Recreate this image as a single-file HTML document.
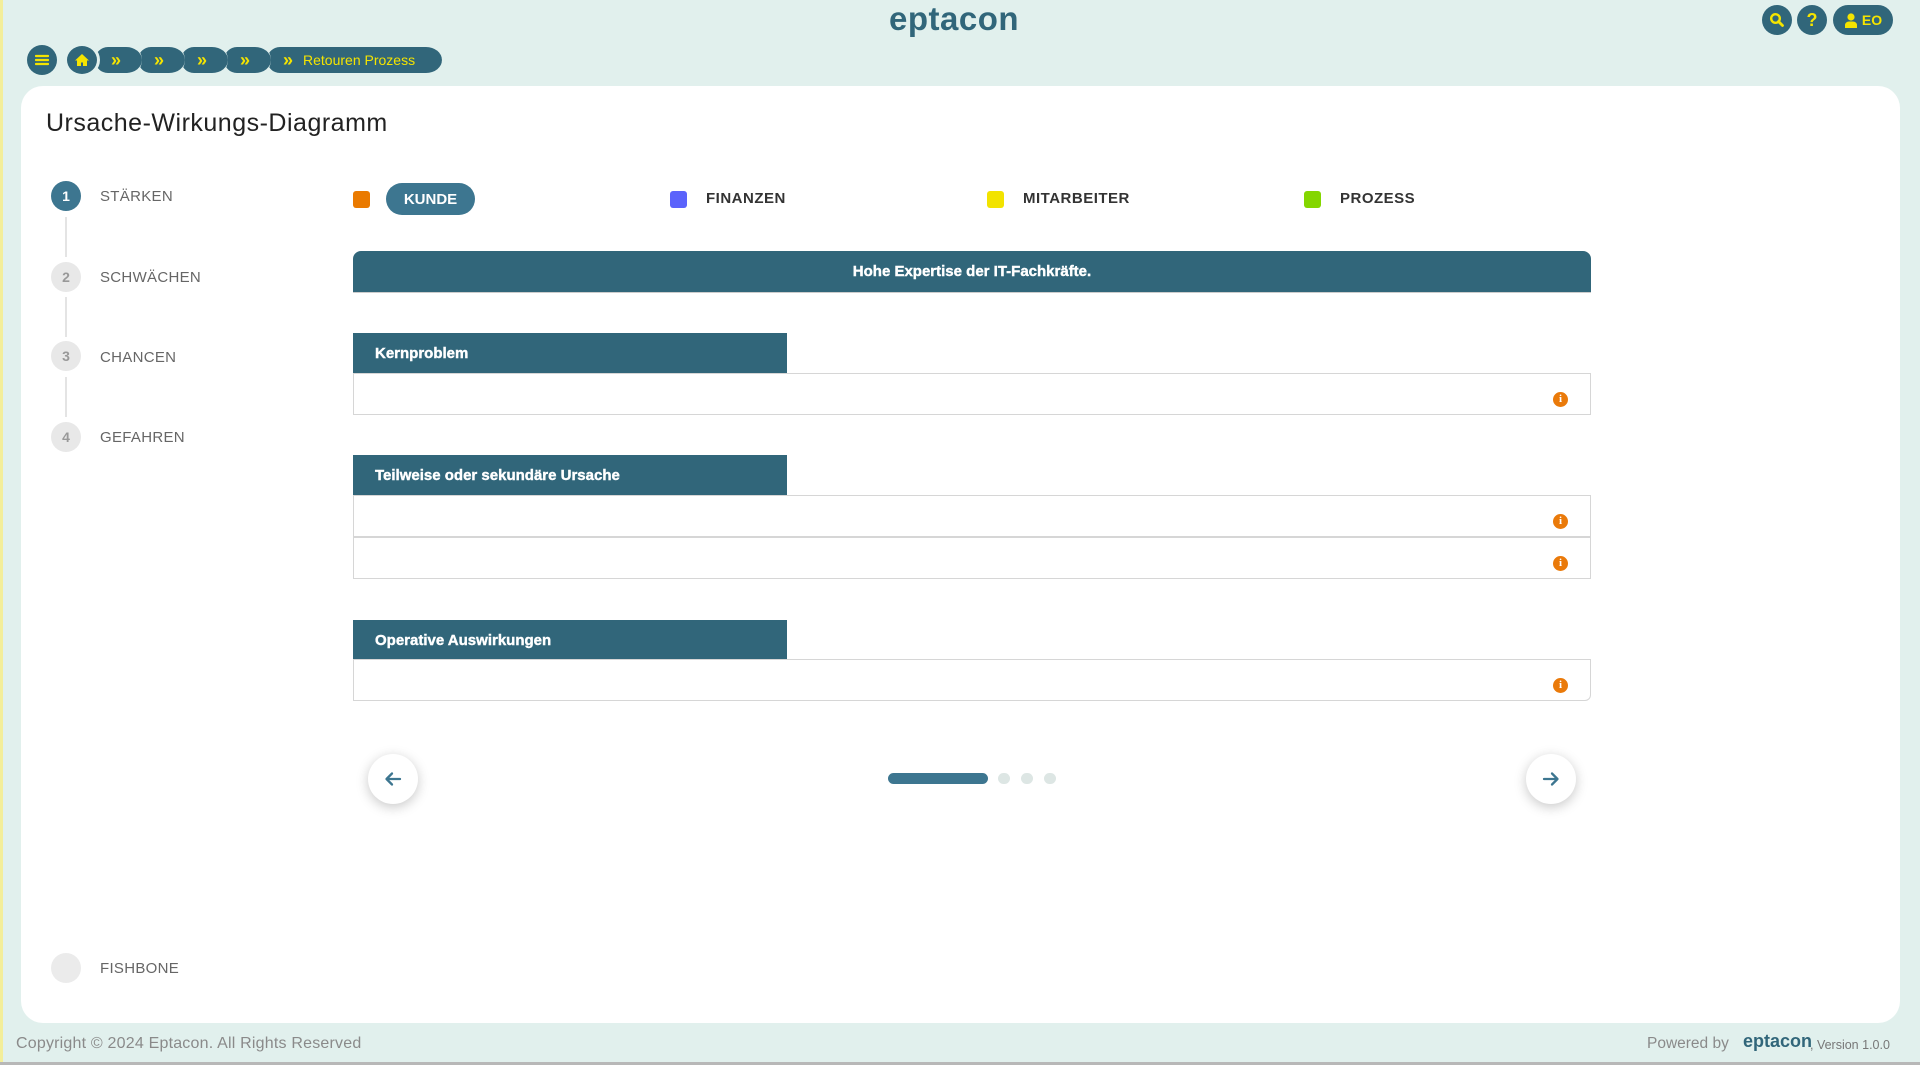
<!DOCTYPE html>
<html><head><meta charset="utf-8"><style>
*{box-sizing:border-box;margin:0;padding:0}
body{width:1920px;height:1065px;background:#e1f0ed;font-family:"Liberation Sans",sans-serif;position:relative;overflow:hidden}
.a{position:absolute}
.logo{left:889px;top:0px;font-size:33px;font-weight:bold;color:#31667a;letter-spacing:.5px}
.tb{background:#31667a;border-radius:16px;height:30px;top:5px;display:flex;align-items:center;justify-content:center;color:#f5e400;font-weight:bold;font-size:14px}
.card{left:21px;top:86px;width:1879px;height:937px;background:#fff;border-radius:22px}
.crumb{top:44px;height:32px;background:#31667a;border-radius:16px;color:#f5e400;display:flex;align-items:center;font-size:14px;border:3px solid #e1f0ed;border-right:none}
.crumb b{font-size:18px;line-height:18px}
.step{left:51px;width:30px;height:30px;border-radius:50%;background:#e8e8e8;color:#999;font-weight:bold;font-size:14px;display:flex;align-items:center;justify-content:center}
.sl{left:100px;font-size:15px;color:#666;letter-spacing:.3px}
.vl{left:65px;width:2px;background:#e4e4e4;height:40px}
.sq{width:17px;height:17px;border-radius:3px;top:191px}
.cat{top:190px;font-size:15px;font-weight:bold;color:#333;letter-spacing:.5px}
.lab{left:353px;width:434px;height:40px;background:#31667a;color:#fff;font-weight:bold;font-size:15px;padding:0 0 0 22px;display:flex;align-items:center;-webkit-text-stroke:.4px #fff}
.inp{left:353px;width:1238px;height:42px;border:1.5px solid #d6d6d6;background:#fff}
.info{left:1553px;width:15px;height:15px;border-radius:50%;background:#ea7a0a;color:#fff;font-size:11px;font-weight:bold;text-align:center;line-height:15px;font-family:"Liberation Serif",serif}
.arr{top:754px;width:50px;height:50px;border-radius:50%;background:#fff;box-shadow:0 3px 12px rgba(0,0,0,.22);display:flex;align-items:center;justify-content:center}
.dot{top:773px;width:12px;height:11px;border-radius:6px;background:#dde6e4}
</style></head><body>
<div class="a" style="left:0;top:0;width:3px;height:1065px;background:#f3ee9a"></div>
<div class="a" style="left:0;top:1062px;width:1920px;height:3px;background:#b8b8b8"></div>
<div class="a logo">eptacon</div>
<div class="a tb" style="left:1762px;width:30px;border-radius:50%"><svg width="16" height="16" viewBox="0 0 16 16"><circle cx="6.5" cy="6.5" r="4.3" stroke="#f5e400" stroke-width="2.4" fill="none"/><path d="M9.5 9.5l4 4" stroke="#f5e400" stroke-width="2.8" stroke-linecap="round"/></svg></div>
<div class="a tb" style="left:1797px;width:30px;border-radius:50%;font-size:18px">?</div>
<div class="a tb" style="left:1833px;width:60px"><svg width="14" height="15" viewBox="0 0 14 15" style="margin-right:4px"><circle cx="7" cy="4" r="3.6" fill="#f5e400"/><path d="M1 15v-3c0-2 2-3.5 4-3.5h4c2 0 4 1.5 4 3.5v3z" fill="#f5e400"/></svg>EO</div>

<div class="a card"></div>

<div class="a" style="left:27px;top:45px;width:30px;height:30px;border-radius:50%;background:#31667a;display:flex;align-items:center;justify-content:center"><svg width="14" height="12" viewBox="0 0 14 12"><path d="M1 2h12M1 6h12M1 10h12" stroke="#f5e400" stroke-width="2.2" stroke-linecap="round"/></svg></div>
<div class="a crumb" style="left:264px;width:178px;padding-left:16px"><b style="margin-right:10px">»</b>Retouren Prozess</div>
<div class="a crumb" style="left:221px;width:50px;padding-left:16px"><b>»</b></div>
<div class="a crumb" style="left:178px;width:50px;padding-left:16px"><b>»</b></div>
<div class="a crumb" style="left:135px;width:50px;padding-left:16px"><b>»</b></div>
<div class="a crumb" style="left:92px;width:50px;padding-left:16px"><b>»</b></div>
<div class="a" style="left:64px;top:43px;width:36px;height:34px;border-radius:50%;background:#31667a;border:3px solid #e1f0ed;display:flex;align-items:center;justify-content:center"><svg width="16" height="14" viewBox="0 0 16 14"><path d="M8 1L1 7.5h2V13h4V9.5h2V13h4V7.5h2z" fill="#f5e400"/></svg></div>

<div class="a" style="left:46px;top:109px;font-size:25px;color:#222;letter-spacing:.5px">Ursache-Wirkungs-Diagramm</div>

<div class="a step" style="top:181px;background:#3d7690;color:#fff">1</div>
<div class="a sl" style="top:188px">STÄRKEN</div>
<div class="a vl" style="top:217px"></div>
<div class="a step" style="top:262px">2</div>
<div class="a sl" style="top:269px">SCHWÄCHEN</div>
<div class="a vl" style="top:297px"></div>
<div class="a step" style="top:341px">3</div>
<div class="a sl" style="top:349px">CHANCEN</div>
<div class="a vl" style="top:377px"></div>
<div class="a step" style="top:422px">4</div>
<div class="a sl" style="top:429px">GEFAHREN</div>
<div class="a step" style="top:953px;background:#ebebeb"></div>
<div class="a sl" style="top:960px">FISHBONE</div>

<div class="a sq" style="left:353px;background:#ea7a00"></div>
<div class="a" style="left:386px;top:183px;width:89px;height:32px;border-radius:16px;background:#3d7690;color:#fff;font-weight:bold;font-size:15px;display:flex;align-items:center;justify-content:center">KUNDE</div>
<div class="a sq" style="left:670px;background:#5b63fb"></div>
<div class="a cat" style="left:706px">FINANZEN</div>
<div class="a sq" style="left:987px;background:#f2e300"></div>
<div class="a cat" style="left:1023px">MITARBEITER</div>
<div class="a sq" style="left:1304px;background:#84d600"></div>
<div class="a cat" style="left:1340px">PROZESS</div>

<div class="a" style="left:353px;top:251px;width:1238px;height:42px;background:#31667a;border-radius:8px 8px 0 0;color:#fff;font-weight:bold;font-size:15px;display:flex;align-items:center;justify-content:center;border-bottom:1.5px solid #ccc;-webkit-text-stroke:.4px #fff">Hohe Expertise der IT-Fachkräfte.</div>

<div class="a lab" style="top:333px">Kernproblem</div>
<div class="a inp" style="top:373px"></div>
<div class="a info" style="top:392px">i</div>

<div class="a lab" style="top:455px">Teilweise oder sekundäre Ursache</div>
<div class="a inp" style="top:495px"></div>
<div class="a info" style="top:514px">i</div>
<div class="a inp" style="top:537px"></div>
<div class="a info" style="top:556px">i</div>

<div class="a lab" style="top:620px">Operative Auswirkungen</div>
<div class="a inp" style="top:659px;border-radius:0 0 6px 0"></div>
<div class="a info" style="top:678px">i</div>

<div class="a arr" style="left:368px"><svg width="18" height="16" viewBox="0 0 18 16"><path d="M16 8H3M8 2.5L2.5 8 8 13.5" stroke="#3d7690" stroke-width="2.3" fill="none" stroke-linecap="round" stroke-linejoin="round"/></svg></div>
<div class="a arr" style="left:1526px"><svg width="18" height="16" viewBox="0 0 18 16"><path d="M2 8h13M10 2.5L15.5 8 10 13.5" stroke="#3d7690" stroke-width="2.3" fill="none" stroke-linecap="round" stroke-linejoin="round"/></svg></div>
<div class="a" style="left:888px;top:773px;width:100px;height:11px;border-radius:6px;background:#3d7690"></div>
<div class="a dot" style="left:998px"></div>
<div class="a dot" style="left:1021px"></div>
<div class="a dot" style="left:1044px"></div>

<div class="a" style="left:16px;top:1035px;font-size:16px;color:#8a8a8a;letter-spacing:.2px">Copyright © 2024 Eptacon. All Rights Reserved</div>
<div class="a" style="left:1647px;top:1035px;font-size:15.5px;color:#8a8a8a">Powered by</div>
<div class="a" style="left:1743px;top:1031px;font-size:18px;font-weight:bold;color:#31667a">eptacon</div>
<div class="a" style="left:1810px;top:1038px;font-size:12.5px;color:#777">, Version 1.0.0</div>
</body></html>
